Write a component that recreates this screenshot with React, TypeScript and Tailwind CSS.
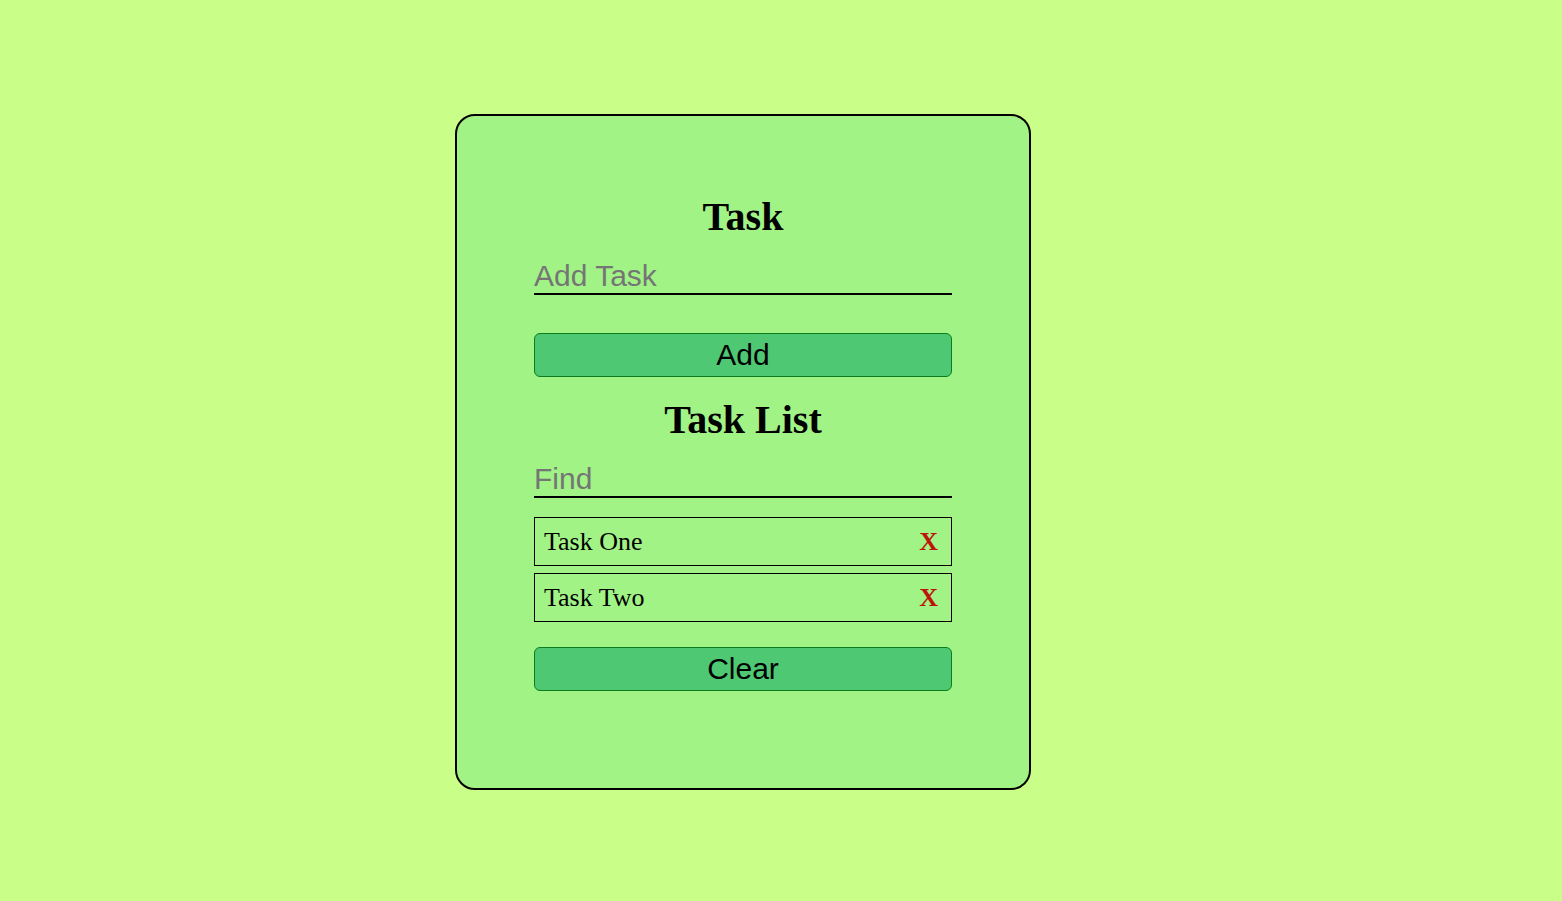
import { useState } from "react";
import type { FormEvent } from "react";

type Task = { id: number; title: string };

const fieldClass =
  "mt-[19px] block h-9 w-full border-b-2 border-black bg-transparent font-['Liberation_Sans',Arial,sans-serif] text-[30px] leading-8 text-black outline-none placeholder:text-[#757575]";
const buttonClass =
  "block h-11 w-full cursor-pointer rounded-md border border-[#0a7d1c] bg-[#4ec873] text-center font-['Liberation_Sans',Arial,sans-serif] text-[30px] leading-none text-black";
const headingClass = "text-center text-[40px] leading-[46px] font-bold";

export default function App() {
  const [tasks, setTasks] = useState<Task[]>([
    { id: 1, title: "Task One" },
    { id: 2, title: "Task Two" },
  ]);
  const [draft, setDraft] = useState("");
  const [query, setQuery] = useState("");

  const addTask = (event: FormEvent) => {
    event.preventDefault();
    const title = draft.trim();
    if (!title) return;
    setTasks((current) => [...current, { id: Date.now(), title }]);
    setDraft("");
  };

  const visible = tasks.filter((task) =>
    task.title.toLowerCase().includes(query.toLowerCase()),
  );

  return (
    <div className="flex min-h-screen justify-center bg-[#c9ff89] pt-[114px] pr-[76px] pb-10 font-['Liberation_Serif','Times_New_Roman',serif] text-black">
      <main className="w-full max-w-[576px] self-start rounded-[20px] border-2 border-black bg-[#a1f386] px-[77px] pt-[78px] pb-[97px]">
        <form onSubmit={addTask}>
          <h1 className={headingClass}>Task</h1>
          <input
            aria-label="Add Task"
            placeholder="Add Task"
            value={draft}
            onChange={(event) => setDraft(event.target.value)}
            className={fieldClass}
          />
          <button type="submit" className={`mt-[38px] ${buttonClass}`}>
            Add
          </button>
        </form>
        <section className="mt-5">
          <h2 className={headingClass}>Task List</h2>
          <input
            aria-label="Find"
            placeholder="Find"
            value={query}
            onChange={(event) => setQuery(event.target.value)}
            className={fieldClass}
          />
          <ul className="mt-[19px] flex flex-col gap-[7px]">
            {visible.map((task) => (
              <li
                key={task.id}
                className="flex h-[49px] items-center justify-between border border-black pr-[13px] pl-[9px] text-[26px] leading-[30px]"
              >
                <span>{task.title}</span>
                <button
                  type="button"
                  aria-label={`Remove ${task.title}`}
                  onClick={() =>
                    setTasks((current) =>
                      current.filter((item) => item.id !== task.id),
                    )
                  }
                  className="cursor-pointer font-bold text-[#bb1408]"
                >
                  X
                </button>
              </li>
            ))}
          </ul>
          <button
            type="button"
            onClick={() => setTasks([])}
            className={`mt-[25px] ${buttonClass}`}
          >
            Clear
          </button>
        </section>
      </main>
    </div>
  );
}
